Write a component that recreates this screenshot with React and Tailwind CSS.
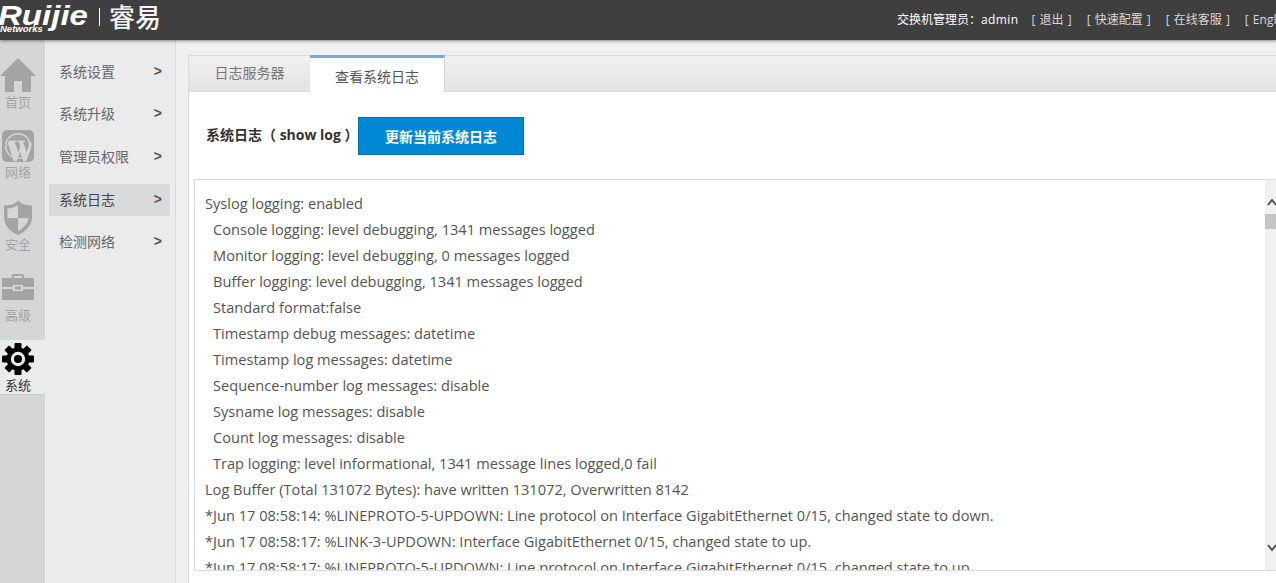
import React from "react";

const sans = "font-['Open_Sans','Noto_Sans_CJK_SC',sans-serif]";

const Home = () => (
  <svg width="36" height="34" viewBox="0 0 36 34" fill="#a3a5a4">
    <path d="M18 0 L36 18 H31 V34 H22 V23 H14 V34 H5 V18 H0 Z" />
  </svg>
);

const Wp = () => (
  <svg width="32" height="32" viewBox="0 0 32 32">
    <rect width="32" height="32" rx="5" fill="#a3a5a4" />
    <circle cx="16" cy="16" r="13" fill="#d5d7d6" />
    <circle cx="16" cy="16" r="11.6" fill="#a3a5a4" />
    <path d="M7 10.5h7.6v1.2l-1.9.3 3.6 10.6 2-6-1.5-4.5-1.5-.3v-1.3h7.8v1.2l-1.9.3 3.5 10.3 2.2-7.2c.3-1.6-.4-3-1.4-3.8l4 1.5v4l-5 14-3 1-3.6-9.8-3.4 9.8-3 -1-5-15.7-1.2-.3z" fill="#d5d7d6" />
  </svg>
);

const Shield = () => (
  <svg width="28" height="34" viewBox="0 0 28 34">
    <path d="M14 0 C18 3 23 4.500 28 4.500 V16 C28 25 21 31 14 34 C7 31 0 25 0 16 V4.500 C5 4.500 10 3 14 0 Z" fill="#a3a5a4" />
    <path d="M14 4 V17 H3.500 V7.500 C7 7.500 11 6 14 4 Z" fill="#d5d7d6" />
    <path d="M14 17 H24.500 C24 23 19 27.500 14 30 Z" fill="#d5d7d6" />
  </svg>
);

const Case = () => (
  <svg width="32" height="26" viewBox="0 0 32 26" fill="#a3a5a4">
    <path d="M10 4 V2 Q10 0 12 0 H20 Q22 0 22 2 V4 H20 V2 H12 V4 Z" />
    <path d="M1 4 H31 Q32 4 32 5 V13 H21 V11 H11 V13 H0 V5 Q0 4 1 4 Z" />
    <path d="M0 15 H11 V17 H21 V15 H32 V25 Q32 26 31 26 H1 Q0 26 0 25 Z" />
    <rect x="13" y="12.500" width="6" height="3" />
  </svg>
);

const Gear = () => (
  <svg width="32" height="32" viewBox="0 0 32 32" fill="#000">
    <g transform="translate(16 16)">
      <circle r="11.500" />
      {[0, 45, 90, 135, 180, 225, 270, 315].map((a) => (
        <rect key={a} x="-3.500" y="-16" width="7" height="8" rx="1" transform={`rotate(${a})`} />
      ))}
      <circle r="7.200" fill="#ebebeb" />
      <circle r="4" fill="#000" />
    </g>
  </svg>
);

const rail = [
  { icon: <Home />, label: "首页", pt: "pt-[2px]", gap: "mt-[3px]" },
  { icon: <Wp />, label: "网络", pt: "pt-[3px]", gap: "mt-[3px]" },
  { icon: <Shield />, label: "安全", pt: "pt-[3px]", gap: "mt-[2px]" },
  { icon: <Case />, label: "高级", pt: "pt-[5px]", gap: "mt-[8px]" },
];

const menu = ["系统设置", "系统升级", "管理员权限", "系统日志", "检测网络"];

const logs = [
  [0, "Syslog logging: enabled"],
  [1, "Console logging: level debugging, 1341 messages logged"],
  [1, "Monitor logging: level debugging, 0 messages logged"],
  [1, "Buffer logging: level debugging, 1341 messages logged"],
  [1, "Standard format:false"],
  [1, "Timestamp debug messages: datetime"],
  [1, "Timestamp log messages: datetime"],
  [1, "Sequence-number log messages: disable"],
  [1, "Sysname log messages: disable"],
  [1, "Count log messages: disable"],
  [1, "Trap logging: level informational, 1341 message lines logged,0 fail"],
  [0, "Log Buffer (Total 131072 Bytes): have written 131072, Overwritten 8142"],
  [0, "*Jun 17 08:58:14: %LINEPROTO-5-UPDOWN: Line protocol on Interface GigabitEthernet 0/15, changed state to down."],
  [0, "*Jun 17 08:58:17: %LINK-3-UPDOWN: Interface GigabitEthernet 0/15, changed state to up."],
  [0, "*Jun 17 08:58:17: %LINEPROTO-5-UPDOWN: Line protocol on Interface GigabitEthernet 0/15, changed state to up."],
];

export default function App() {
  return (
    <div className={`${sans} w-[1276px] h-[583px] overflow-hidden flex flex-col bg-[#f0f0f0]`}>
      <header className="relative z-10 h-[40px] shrink-0 bg-[#3f3f3f] shadow-[0_1px_3px_rgba(0,0,0,0.45)] flex items-center overflow-hidden text-white">
        <div className="w-[897px] shrink-0 flex items-center h-full">
          <div className="relative ml-[-2px] w-[100px] h-full">
            <span className="block origin-left scale-x-[1.18] font-['Liberation_Sans',sans-serif] italic font-bold text-[28px] leading-[32px]">Ruijie</span>
            <span className="absolute left-[2px] top-[25px] font-['Liberation_Sans',sans-serif] italic font-bold text-[9.5px] leading-[8px]">Networks</span>
          </div>
          <div className="ml-[1px] w-px h-[18px] bg-white mt-[-6px]" />
          <span className="ml-[9px] text-[26px] leading-[30px] font-medium mt-[-9px] text-[#f4f4f4] font-['Noto_Sans_CJK_SC',sans-serif]">睿易</span>
        </div>
        <div className="flex items-center whitespace-nowrap text-[12px] [word-spacing:1px]">
          <span className="text-white">交换机管理员：<span className="tracking-[0.4px]">admin</span></span>
          <span className="ml-[13px] text-[#d8d8d8]">[ 退出 ]</span>
          <span className="ml-[15px] text-[#d8d8d8]">[ 快速配置 ]</span>
          <span className="ml-[15px] text-[#d8d8d8]">[ 在线客服 ]</span>
          <span className="ml-[15px] text-[#d8d8d8]">[ English ]</span>
        </div>
      </header>

      <div className="flex flex-1 min-h-0">
        <nav className="w-[45px] shrink-0 bg-[#d5d7d6] flex flex-col pt-[16px]">
          {rail.map((r) => (
            <div key={r.label} className={`h-[71px] w-[36px] ${r.pt} flex flex-col items-center shrink-0`}>
              {r.icon}
              <span className={`${r.gap} text-[13px] leading-[14px] text-[#a3a5a4]`}>{r.label}</span>
            </div>
          ))}
          <div className="h-[55px] shrink-0 bg-[#ebebeb] border-b border-[#c8cac9] pt-[3px]">
            <div className="w-[36px] flex flex-col items-center">
              <Gear />
              <span className="mt-[3px] text-[13px] leading-[14px] text-[#333]">系统</span>
            </div>
          </div>
        </nav>

        <aside className="w-[131px] shrink-0 bg-[#ebebeb] border-r border-[#d8d8d8] pl-[4px] pr-[5px] pt-[16px]">
          {menu.map((m) => (
            <div
              key={m}
              className={`h-[32px] mb-[10.7px] flex items-center justify-between pl-[10px] pr-[8px] pb-[2px] text-[14px] ${m === "系统日志" ? "bg-[#d9dbda] text-[#444]" : "text-[#666]"}`}
            >
              <span>{m}</span>
              <span className="font-bold text-[14px] text-[#555] font-['Liberation_Sans',sans-serif]">&gt;</span>
            </div>
          ))}
        </aside>

        <main className="flex-1 min-w-0 pl-[12px] pt-[15px] flex flex-col">
          <div className="flex-1 min-h-0 bg-white border-l border-[#dcdcdc] flex flex-col">
            <div className="h-[37px] shrink-0 flex bg-gradient-to-b from-[#f1f1f1] to-[#e3e3e3] border-t border-[#dcdcdc] border-b">
              <div className="w-[121px] flex items-center justify-center text-[14px] text-[#777] pb-[2px]">日志服务器</div>
              <div className="w-[135px] h-[37px] mt-[-1px] bg-white border-t-[3px] border-[#7aa9e0] border-r border-r-[#d5d5d5] flex items-center justify-center text-[14px] text-[#555] pt-[2px]">查看系统日志</div>
            </div>

            <div className="h-[87px] shrink-0 flex items-center pl-[17px] pt-[1px]">
              <span className="w-[152px] shrink-0 pb-[4px] text-[14px] font-bold text-[#333] whitespace-nowrap">系统日志（ show log ）</span>
              <button className="w-[166px] h-[38px] bg-[#0088d4] border border-[#006fae] text-white text-[14px] font-bold">更新当前系统日志</button>
            </div>

            <div className="ml-[5px] h-[392px] shrink-0 border border-[#dcdcdc] border-r-0 flex overflow-hidden">
              <div className="flex-1 min-w-0 overflow-hidden pl-[10px] pt-[10px] text-[14.6px] leading-[26px] text-[#555] whitespace-nowrap">
                {logs.map(([ind, t], i) => (
                  <div key={i} className={ind ? "pl-[8px]" : ""}>{t}</div>
                ))}
              </div>
              <div className="relative w-[11px] shrink-0 bg-[#f1f1f1] overflow-hidden">
                <svg className="absolute left-[2px] top-[17px]" width="10" height="10" viewBox="0 0 10 10"><path d="M1 8 L5 3 L9 8" fill="none" stroke="#505050" strokeWidth="2" /></svg>
                <div className="absolute left-0 top-[34px] w-[11px] h-[15px] bg-[#c4c4c4]" />
                <svg className="absolute left-[2px] top-[363px]" width="10" height="10" viewBox="0 0 10 10"><path d="M1 2 L5 7 L9 2" fill="none" stroke="#505050" strokeWidth="2" /></svg>
              </div>
            </div>
          </div>
        </main>
      </div>
    </div>
  );
}
